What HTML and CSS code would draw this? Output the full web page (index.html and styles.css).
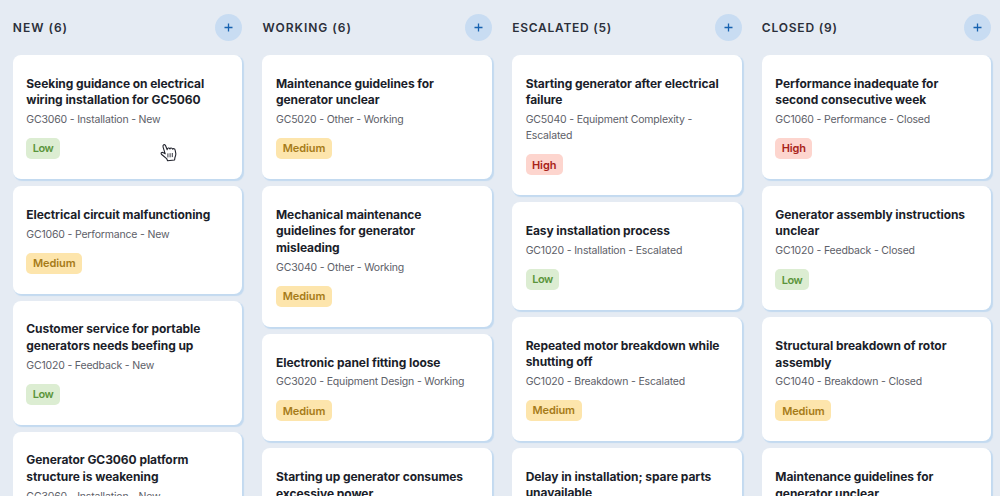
FILE: index.html
```html
<!DOCTYPE html>
<html lang="en">
<head>
<meta charset="utf-8">
<title>Cases</title>
<link rel="stylesheet" href="styles.css">
</head>
<body>
<main class="board">
  <section class="column">
    <header class="head"><h2 class="name name-new">NEW (6)</h2><button class="add" aria-label="Add"><svg viewBox="0 0 9 9"><path d="M4.5 .5v8M.5 4.5h8"/></svg></button></header>
    <article class="card"><h3>Seeking guidance on electrical<br>wiring installation for GC5060</h3><p>GC3060 - Installation - New</p><span class="tag low">Low</span></article>
    <article class="card"><h3>Electrical circuit malfunctioning</h3><p>GC1060 - Performance - New</p><span class="tag medium">Medium</span></article>
    <article class="card"><h3>Customer service for portable<br>generators needs beefing up</h3><p>GC1020 - Feedback - New</p><span class="tag low">Low</span></article>
    <article class="card"><h3>Generator GC3060 platform<br>structure is weakening</h3><p>GC3060 - Installation - New</p></article>
  </section>
  <section class="column">
    <header class="head"><h2 class="name name-working">WORKING (6)</h2><button class="add" aria-label="Add"><svg viewBox="0 0 9 9"><path d="M4.5 .5v8M.5 4.5h8"/></svg></button></header>
    <article class="card"><h3>Maintenance guidelines for<br>generator unclear</h3><p>GC5020 - Other - Working</p><span class="tag medium">Medium</span></article>
    <article class="card"><h3>Mechanical maintenance<br>guidelines for generator<br>misleading</h3><p>GC3040 - Other - Working</p><span class="tag medium">Medium</span></article>
    <article class="card"><h3>Electronic panel fitting loose</h3><p>GC3020 - Equipment Design - Working</p><span class="tag medium">Medium</span></article>
    <article class="card"><h3>Starting up generator consumes<br>excessive power</h3></article>
  </section>
  <section class="column">
    <header class="head"><h2 class="name name-escalated">ESCALATED (5)</h2><button class="add" aria-label="Add"><svg viewBox="0 0 9 9"><path d="M4.5 .5v8M.5 4.5h8"/></svg></button></header>
    <article class="card"><h3>Starting generator after electrical<br>failure</h3><p>GC5040 - Equipment Complexity -<br>Escalated</p><span class="tag high">High</span></article>
    <article class="card"><h3>Easy installation process</h3><p>GC1020 - Installation - Escalated</p><span class="tag low">Low</span></article>
    <article class="card"><h3>Repeated motor breakdown while<br>shutting off</h3><p>GC1020 - Breakdown - Escalated</p><span class="tag medium">Medium</span></article>
    <article class="card"><h3>Delay in installation; spare parts<br>unavailable</h3></article>
  </section>
  <section class="column">
    <header class="head"><h2 class="name name-closed">CLOSED (9)</h2><button class="add" aria-label="Add"><svg viewBox="0 0 9 9"><path d="M4.5 .5v8M.5 4.5h8"/></svg></button></header>
    <article class="card"><h3>Performance inadequate for<br>second consecutive week</h3><p>GC1060 - Performance - Closed</p><span class="tag high">High</span></article>
    <article class="card"><h3>Generator assembly instructions<br>unclear</h3><p>GC1020 - Feedback - Closed</p><span class="tag low">Low</span></article>
    <article class="card"><h3>Structural breakdown of rotor<br>assembly</h3><p>GC1040 - Breakdown - Closed</p><span class="tag medium">Medium</span></article>
    <article class="card"><h3>Maintenance guidelines for<br>generator unclear</h3></article>
  </section>
</main>
<svg class="cursor" viewBox="0 0 17 19"><path d="M5.2 10.8 3.1 4.1C2.4 1.8 4.7.6 5.6 2.8l1.6 3.9c0-2 2-2.2 2.7-.7.4-1.4 2.2-1.3 2.7.2.7-1 2.3-.6 2.5.8l.7 3.4c.3 1.6-.4 3-.9 4.2l-.3 2.4-7 .7-1-2.1-4.9-4.1c-1.5-1.5.2-2.8 1.8-1.7z"/><path class="ribs" d="M7.9 10.4v4M10.1 10.2v4.1M12.3 10v4.1"/></svg>
</body>
</html>
```
FILE: styles.css
```css
* { box-sizing: border-box; }
body {
  margin: 0;
  height: 496px;
  overflow: hidden;
  background: #e5ebf3;
  font-family: Inter, "Liberation Sans", sans-serif;
}
.board {
  display: grid;
  grid-template-columns: repeat(4, 229.5px);
  column-gap: 20.2px;
  padding: 14px 0 0 12.8px;
}
.column { display: flex; flex-direction: column; gap: 7px; }
.head {
  display: flex;
  align-items: center;
  justify-content: space-between;
  height: 27px;
  margin-bottom: 7px;
}
.name {
  margin: 0;
  color: #2b2f3a;
  font-size: 12px;
  font-weight: 600;
  letter-spacing: 1px;
  white-space: nowrap;
}
.name-working { letter-spacing: .98px; }
.name-escalated { letter-spacing: .74px; }
.name-closed { letter-spacing: .8px; }
.add {
  display: grid;
  place-items: center;
  width: 27px;
  height: 27px;
  padding: 0;
  border: 0;
  border-radius: 50%;
  background: #c8dcf2;
}
.add svg { width: 9px; height: 9px; fill: none; stroke: #1762b0; stroke-width: 1.3; }
.card {
  padding: 20.6px 0 20.2px 13.5px;
  border-radius: 8px;
  background: #fff;
  box-shadow: 1.5px 1.8px 1px #c3daf0;
  white-space: nowrap;
}
.card h3 {
  margin: 0 0 3.3px;
  color: #1b1e2a;
  font-size: 12px;
  font-weight: 700;
  line-height: 16.6px;
  letter-spacing: -.07px;
}
.card p {
  margin: 0 0 9.7px;
  color: #5d6068;
  font-size: 10.5px;
  line-height: 16.2px;
  letter-spacing: -.18px;
}
.tag {
  display: flex;
  align-items: center;
  justify-content: center;
  height: 21px;
  border-radius: 5px;
  font-size: 11px;
  font-weight: 600;
  letter-spacing: -.1px;
}
.low { width: 33.5px; background: #dcedd2; color: #5b953b; letter-spacing: -.5px; }
.medium { width: 56px; background: #fde5ac; color: #a67b18; }
.high { width: 37px; background: #fdd5ce; color: #a82319; }
.cursor {
  position: absolute;
  left: 160px;
  top: 143px;
  width: 17px;
  height: 19px;
  fill: #fff;
  stroke: #20222c;
  stroke-width: 1.1;
  stroke-linejoin: round;
}
.ribs { fill: none; stroke-width: .9; }
```
